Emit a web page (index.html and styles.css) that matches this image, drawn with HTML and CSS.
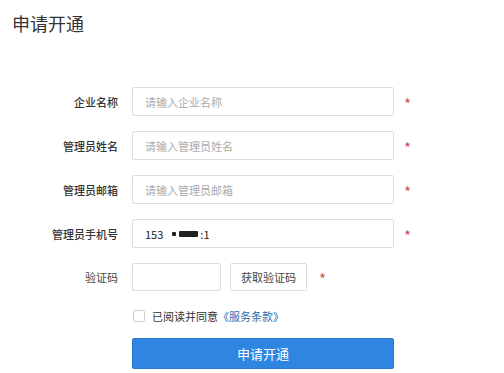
FILE: index.html
```html
<!DOCTYPE html>
<html lang="zh-CN">
<head>
<meta charset="utf-8">
<title>申请开通</title>
<link rel="stylesheet" href="styles.css">
</head>
<body>
<div class="page">
  <h1 class="title">申请开通</h1>
  <form class="form">
    <div class="row">
      <label class="label">企业名称</label>
      <input class="input" type="text" placeholder="请输入企业名称">
      <span class="req">*</span>
    </div>
    <div class="row">
      <label class="label">管理员姓名</label>
      <input class="input" type="text" placeholder="请输入管理员姓名">
      <span class="req">*</span>
    </div>
    <div class="row">
      <label class="label">管理员邮箱</label>
      <input class="input" type="text" placeholder="请输入管理员邮箱">
      <span class="req">*</span>
    </div>
    <div class="row">
      <label class="label">管理员手机号</label>
      <div class="input filled"><span>153</span><span class="mask mask-a"></span><span class="mask mask-b"></span><span class="tail">:1</span></div>
      <span class="req">*</span>
    </div>
    <div class="row row-code">
      <label class="label light">验证码</label>
      <input class="input code" type="text">
      <button type="button" class="btn-code">获取验证码</button>
      <span class="req">*</span>
    </div>
    <div class="row row-agree">
      <span class="label"></span>
      <span class="checkbox"></span>
      <span class="agree">已阅读并同意<a class="link">《服务条款》</a></span>
    </div>
    <div class="row row-submit">
      <span class="label"></span>
      <button type="button" class="submit">申请开通</button>
    </div>
  </form>
</div>
</body>
</html>
```
FILE: styles.css
```css
* { box-sizing: border-box; }
html, body { margin: 0; padding: 0; background: #fff; }
body {
  font-family: "Noto Sans CJK SC", "Noto Sans", sans-serif;
  color: #333;
}
.page { padding: 10px 12px 0 12px; }
.title {
  margin: 0;
  font-size: 18px;
  font-weight: normal;
  line-height: 26px;
  color: #333;
}
.form {
  margin-top: 51px;
  margin-left: -12px;
  display: flex;
  flex-direction: column;
}
.row {
  display: flex;
  align-items: center;
  height: 29px;
  margin-bottom: 15px;
}
.label {
  width: 118px;
  flex: none;
  text-align: right;
  font-size: 11px;
  color: #333;
  font-weight: 500;
  margin-right: 14px;
}
.label.light { font-weight: normal; color: #444; }
.input {
  width: 262px;
  height: 29px;
  border: 1px solid #dcdcdc;
  border-radius: 2px;
  padding: 0 12px;
  font-family: inherit;
  font-size: 11px;
  color: #333;
  outline: none;
  background: #fff;
}
.input::placeholder { color: #ababab; }
.filled {
  display: flex;
  align-items: center;
  font-size: 11px;
  color: #222;
}
.mask {
  display: inline-block;
  background: #222;
  height: 6px;
  border-radius: 1px;
}
.mask-a { width: 4px; height: 4px; margin-left: 9px; }
.mask-b { width: 19px; margin-left: 3px; }
.tail { margin-left: 2px; }
.req {
  color: #c9585c;
  font-size: 15px;
  margin-left: 10px;
  line-height: 1;
  padding-top: 3px;
}
.row-code { height: 28px; }
.input.code { width: 89px; height: 28px; }
.btn-code {
  margin-left: 9px;
  width: 77px;
  height: 28px;
  border: 1px solid #dcdcdc;
  border-radius: 2px;
  background: #fff;
  font-family: inherit;
  font-size: 11px;
  color: #444;
  padding: 0;
}
.row-code .req { margin-left: 12px; }
.row-agree {
  height: 14px;
  margin-top: 3px;
  margin-bottom: 15px;
}
.checkbox {
  width: 12px;
  height: 12px;
  border: 1px solid #cfcfcf;
  border-radius: 2px;
  margin-left: 1px;
  background: #fff;
}
.agree {
  margin-left: 7px;
  font-size: 11px;
  color: #333;
}
.link { color: #2b6db3; }
.row-submit { height: 31px; }
.submit {
  width: 262px;
  height: 31px;
  border: 1px solid #2a7acb;
  border-radius: 2px;
  background: #2e86e0;
  color: #fff;
  font-family: inherit;
  font-size: 13px;
  padding: 0;
}
```
